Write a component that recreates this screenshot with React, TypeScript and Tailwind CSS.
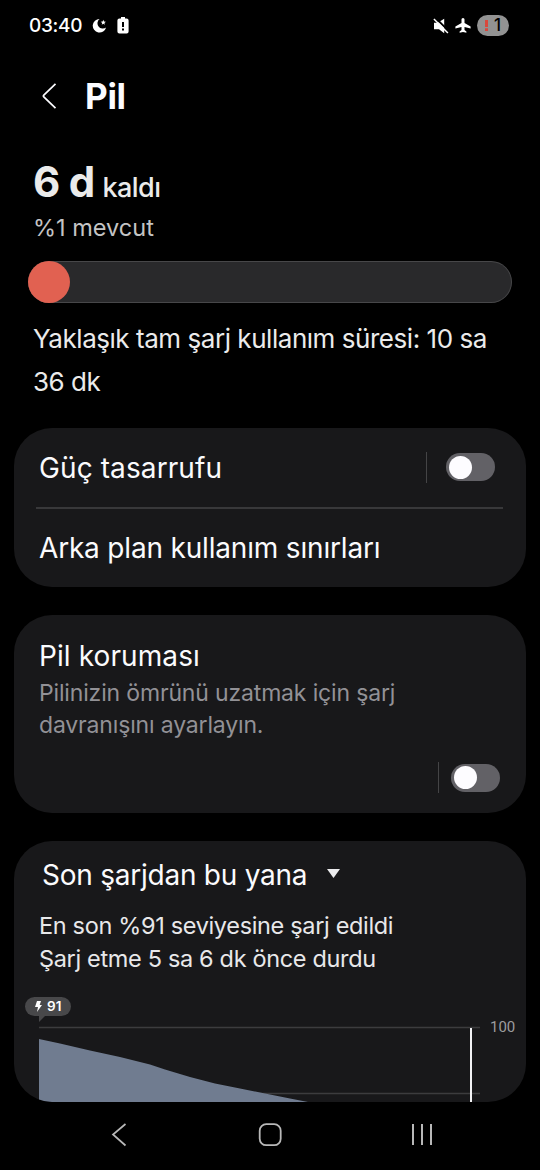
import { ReactNode } from 'react';
import clsx from 'clsx';

const Toggle = () => (
    <div className="h-7 w-[49px] rounded-full bg-[#626166] flex items-center pl-[2.5px]">
        <div className="size-[23px] rounded-full bg-[#fdfcff]" />
    </div>
);

const ToggleDivider = () => <div className="h-[31px] w-px bg-[#444446]" />;

const Card = ({ className, children }: { className?: string; children: ReactNode }) => (
    <section className={clsx('mx-3.5 rounded-[38px] bg-[#18181a] overflow-hidden', className)}>{children}</section>
);

const StatusBar = () => (
    <div className="h-[50px] pt-px flex items-center text-white">
        <span className="ml-[29px] w-[63px] text-[19px] leading-none font-medium tracking-[-0.3px]">03:40</span>
        <svg className="size-[15px]" viewBox="0 0 15 15" fill="currentColor">
            <path d="M7.600.9A6.800 6.800 0 1 0 14.100 9.500 4.900 4.900 0 0 1 7.600.9Z" />
            <path d="m11.300 1.800.7 1.800 1.900.1-1.500 1.200.5 1.900-1.600-1.100-1.600 1.100.5-1.900-1.500-1.200 1.900-.1Z" />
        </svg>
        <svg className="ml-2.5 w-3 h-[17px]" viewBox="0 0 12 17">
            <path
                d="M4 0h4v1.6h1.6A2 2 0 0 1 11.6 3.6v11a2 2 0 0 1-2 2H2.4a2 2 0 0 1-2-2v-11a2 2 0 0 1 2-2H4Z"
                fill="#fff"
            />
            <path d="M5 5h2v5H5ZM5 11.6h2v2H5Z" fill="#000" />
        </svg>
        <svg className="ml-auto size-4" viewBox="0 0 16 16" fill="none">
            <path d="M1 4.800h3.700L11.200.8v14.400L6 11.300H1Z" fill="#fff" />
            <path d="m2.200-.5 14 14" stroke="#000" strokeWidth="1.800" />
            <path d="m.9 1 14 14" stroke="#fff" strokeWidth="1.500" />
        </svg>
        <svg className="ml-1.5 w-4 h-[15px]" viewBox="0 0 16 15" fill="currentColor">
            <path d="M8 0c.9 0 1.500.8 1.500 1.600v3.500l6.100 3.500v2L9.500 9.100v3l1.900 1.300v1.300L8 14l-3.400.7v-1.300l1.900-1.300v-3L.4 10.600v-2l6.100-3.500V1.600C6.500.8 7.100 0 8 0Z" />
        </svg>
        <div className="ml-1.5 mr-[31px] h-[21px] w-8 rounded-full bg-[#929292] flex items-center text-black">
            <svg className="ml-2 w-[3px] h-[11px]" viewBox="0 0 3 11" fill="#d9473c">
                <path d="M0 0h3v7H0ZM0 8.200h3V11H0Z" />
            </svg>
            <span className="ml-[6px] text-[17px] leading-none font-medium">1</span>
        </div>
    </div>
);

const Header = () => (
    <header className="h-[92px] flex items-center text-[#fcfcff]">
        <svg className="ml-[42px] w-[15px] h-[26px]" viewBox="0 0 15 26" fill="none" stroke="currentColor">
            <path d="M13.500.8 1.800 12.200q-.8.800 0 1.600L13.500 25.200" strokeWidth="1.7" />
        </svg>
        <h1 className="ml-7 pt-px text-[35px] leading-none font-bold tracking-[-0.3px]">Pil</h1>
    </header>
);

const BatterySummary = () => (
    <div className="pt-[17px] text-[#ebebeb]">
        <div className="ml-[33px] h-[46px] flex items-baseline leading-[46px]">
            <span className="text-[42px] font-bold tracking-[-0.7px]">6 d</span>
            <span className="ml-[8px] text-[27px] font-medium tracking-[-0.6px]">kaldı</span>
        </div>
        <p className="ml-[33px] mt-[9px] h-7 text-[23.5px] leading-7 text-[#c4c4c4]">%1 mevcut</p>
        <div className="mt-[19px] ml-7 mr-7 h-[42px] rounded-full bg-[#29292b] border-y border-r border-[#474749]">
            <div className="-mt-px size-[42px] rounded-full bg-[#e16151]" />
        </div>
        <p className="ml-[33px] mt-[14px] text-[26px] leading-[43px] tracking-[-0.46px]">
            Yaklaşık tam şarj kullanım süresi: 10 sa
            <br />
            36 dk
        </p>
    </div>
);

const NavBar = () => (
    <nav className="h-[68px] flex justify-center text-[#b8b8b8]">
        <svg className="w-[340px] h-[68px]" viewBox="100 1102 340 68" fill="none" stroke="currentColor">
            <path d="M125.500 1124 113 1134.500 125.500 1145.500" strokeWidth="1.700" />
            <rect x="259.700" y="1124.200" width="21" height="21" rx="6.500" strokeWidth="1.800" />
            <path d="M413 1124v21M422 1124v21M431 1124v21" strokeWidth="2" />
        </svg>
    </nav>
);

const UsageChart = () => (
    <div className="relative h-[122px]">
        <svg className="w-[512px] h-[122px]" viewBox="14 980 512 122">
            <path d="M39 1027.500H480M39 1093.500H480" stroke="#3c3c3e" strokeWidth="1.500" />
            <path
                d="M39 1039 60 1043.500 90 1050.500 120 1057 150 1064.500 165 1069.500 190 1077 215 1083.500 240 1088.500 265 1093.500 290 1098.500 308 1102H39Z"
                fill="#707c90"
            />
            <path d="M471 1028v74" stroke="#f2f2f4" strokeWidth="2" />
            <path d="M39 1015h7l-7 7Z" fill="#48484a" />
        </svg>
        <div className="absolute left-[11px] top-[17px] w-[46px] h-[19px] rounded-full bg-[#48484a] flex items-center text-white">
            <svg className="ml-2.5 w-[7px] h-[11px]" viewBox="0 0 7 11" fill="currentColor">
                <path d="M2 0h4L4.700 4H7L2 11 3 6H0Z" />
            </svg>
            <span className="ml-[5px] text-[13.5px] leading-none font-semibold">91</span>
        </div>
        <span className="absolute left-[476px] top-[38px] text-[15px] leading-[18px] text-[#9c9c9e] font-[Roboto,sans-serif]">
            100
        </span>
    </div>
);

export default function App() {
    return (
        <main className="w-[540px] h-[1170px] overflow-hidden bg-black font-[Inter,sans-serif] whitespace-nowrap">
            <StatusBar />
            <Header />
            <BatterySummary />
            <Card className="mt-[25px] h-[159px] text-[28px] text-[#fbfbfd]">
                <div className="h-[79px] flex items-center pl-[25px] pr-[31px]">
                    <span className="tracking-[0.1px]">Güç tasarrufu</span>
                    <div className="ml-auto mb-px flex items-center gap-[19px]">
                        <ToggleDivider />
                        <Toggle />
                    </div>
                </div>
                <div className="ml-[22px] mr-[23px] h-[2px] bg-[#38383a]" />
                <div className="h-[78px] pl-[25px] flex items-center tracking-[-0.18px]">Arka plan kullanım sınırları</div>
            </Card>
            <Card className="mt-7 h-[198px] pt-[21px] pl-[25px]">
                <h2 className="text-[28px] leading-10 tracking-[0.1px] text-[#fbfbfd]">Pil koruması</h2>
                <p className="mt-px text-[23px] leading-8 text-[#929196] tracking-[-0.16px]">
                    Pilinizin ömrünü uzatmak için şarj
                    <br />
                    davranışını ayarlayın.
                </p>
                <div className="mt-[21px] mr-[26px] flex justify-end items-center gap-3">
                    <ToggleDivider />
                    <Toggle />
                </div>
            </Card>
            <Card className="mt-7 h-[261px]">
                <div className="h-[68px] pl-[28px] flex items-center text-[28px] text-[#fbfbfd]">
                    <span className="tracking-[-0.24px]">Son şarjdan bu yana</span>
                    <svg className="ml-5 mb-[3px] w-[13px] h-[9px]" viewBox="0 0 13 9" fill="#ececee">
                        <path d="M0 0h13L6.500 9Z" />
                    </svg>
                </div>
                <p className="h-[71px] pl-[25px] text-[23.5px] leading-[33px] tracking-[-0.34px] text-[#e8e8ea]">
                    En son %91 seviyesine şarj edildi
                    <br />
                    Şarj etme 5 sa 6 dk önce durdu
                </p>
                <UsageChart />
            </Card>
            <NavBar />
        </main>
    );
}
